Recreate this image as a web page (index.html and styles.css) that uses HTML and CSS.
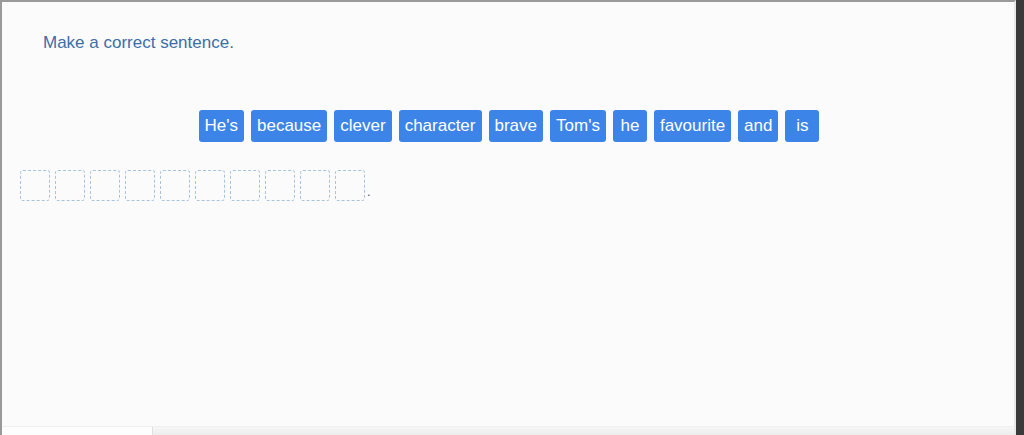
FILE: index.html
```html
<!DOCTYPE html>
<html>

<head>
  <title>Make a correct sentence</title>
  <meta name="viewport" content="width=device-width,initial-scale=1">
  <link rel="stylesheet" href="styles.css">
</head>

<body>
  <div class="frame">
    <main class="exercise">
      <p class="task">Make a correct sentence.</p>
      <div class="words">
        <span class="word">He's</span>
        <span class="word">because</span>
        <span class="word">clever</span>
        <span class="word">character</span>
        <span class="word">brave</span>
        <span class="word">Tom's</span>
        <span class="word">he</span>
        <span class="word">favourite</span>
        <span class="word">and</span>
        <span class="word">is</span>
      </div>
      <div class="answer">
        <span class="slot"></span>
        <span class="slot"></span>
        <span class="slot"></span>
        <span class="slot"></span>
        <span class="slot"></span>
        <span class="slot"></span>
        <span class="slot"></span>
        <span class="slot"></span>
        <span class="slot"></span>
        <span class="slot"></span>
        <span class="dot">.</span>
      </div>
    </main>
    <footer class="bottom">
      <div class="bottom__left"></div>
    </footer>
  </div>
  <div class="side"></div>
</body>

</html>
```

FILE: styles.css
```css
html,
body {
  margin: 0;
  height: 100%;
}

body {
  display: flex;
  background: #3a3a3a;
  font-family: 'Liberation Sans', Arial, sans-serif;
  font-size: 17px;
  overflow: hidden;
}

.frame {
  width: 1012px;
  height: 433px;
  border-top: 2px solid #9a9a9a;
  border-left: 2px solid #9a9a9a;
  border-right: 2px solid #e8e8e8;
  background: #fbfbfb;
  display: flex;
  flex-direction: column;
}

.side {
  flex: 1;
}

.exercise {
  flex: 1;
}

.task {
  margin: 31px 0 0 41px;
  color: #3c6ea8;
  line-height: 20px;
}

.words {
  display: flex;
  justify-content: center;
  gap: 7px;
  margin-top: 57px;
  padding-left: 2px;
}

.word {
  box-sizing: border-box;
  min-width: 34px;
  text-align: center;
  background: #3d84e8;
  color: #fff;
  border-radius: 3px;
  height: 32px;
  line-height: 32px;
  padding: 0 6px;
}

.answer {
  display: flex;
  align-items: flex-end;
  gap: 5px;
  margin: 28px 0 0 18px;
}

.slot {
  width: 28px;
  height: 29px;
  border: 1px dashed #a9c3dc;
  border-radius: 3px;
}

.dot {
  margin-left: -3px;
  font-size: 13px;
  line-height: 18px;
  color: #555;
}

.bottom {
  height: 8px;
  background: linear-gradient(to bottom, #f6f6f6, #ededed);
  border-top: 1px solid #f0f0f0;
  display: flex;
}

.bottom__left {
  width: 150px;
  border-right: 1px solid #e0e0e0;
  background: #fdfdfd;
}
```
